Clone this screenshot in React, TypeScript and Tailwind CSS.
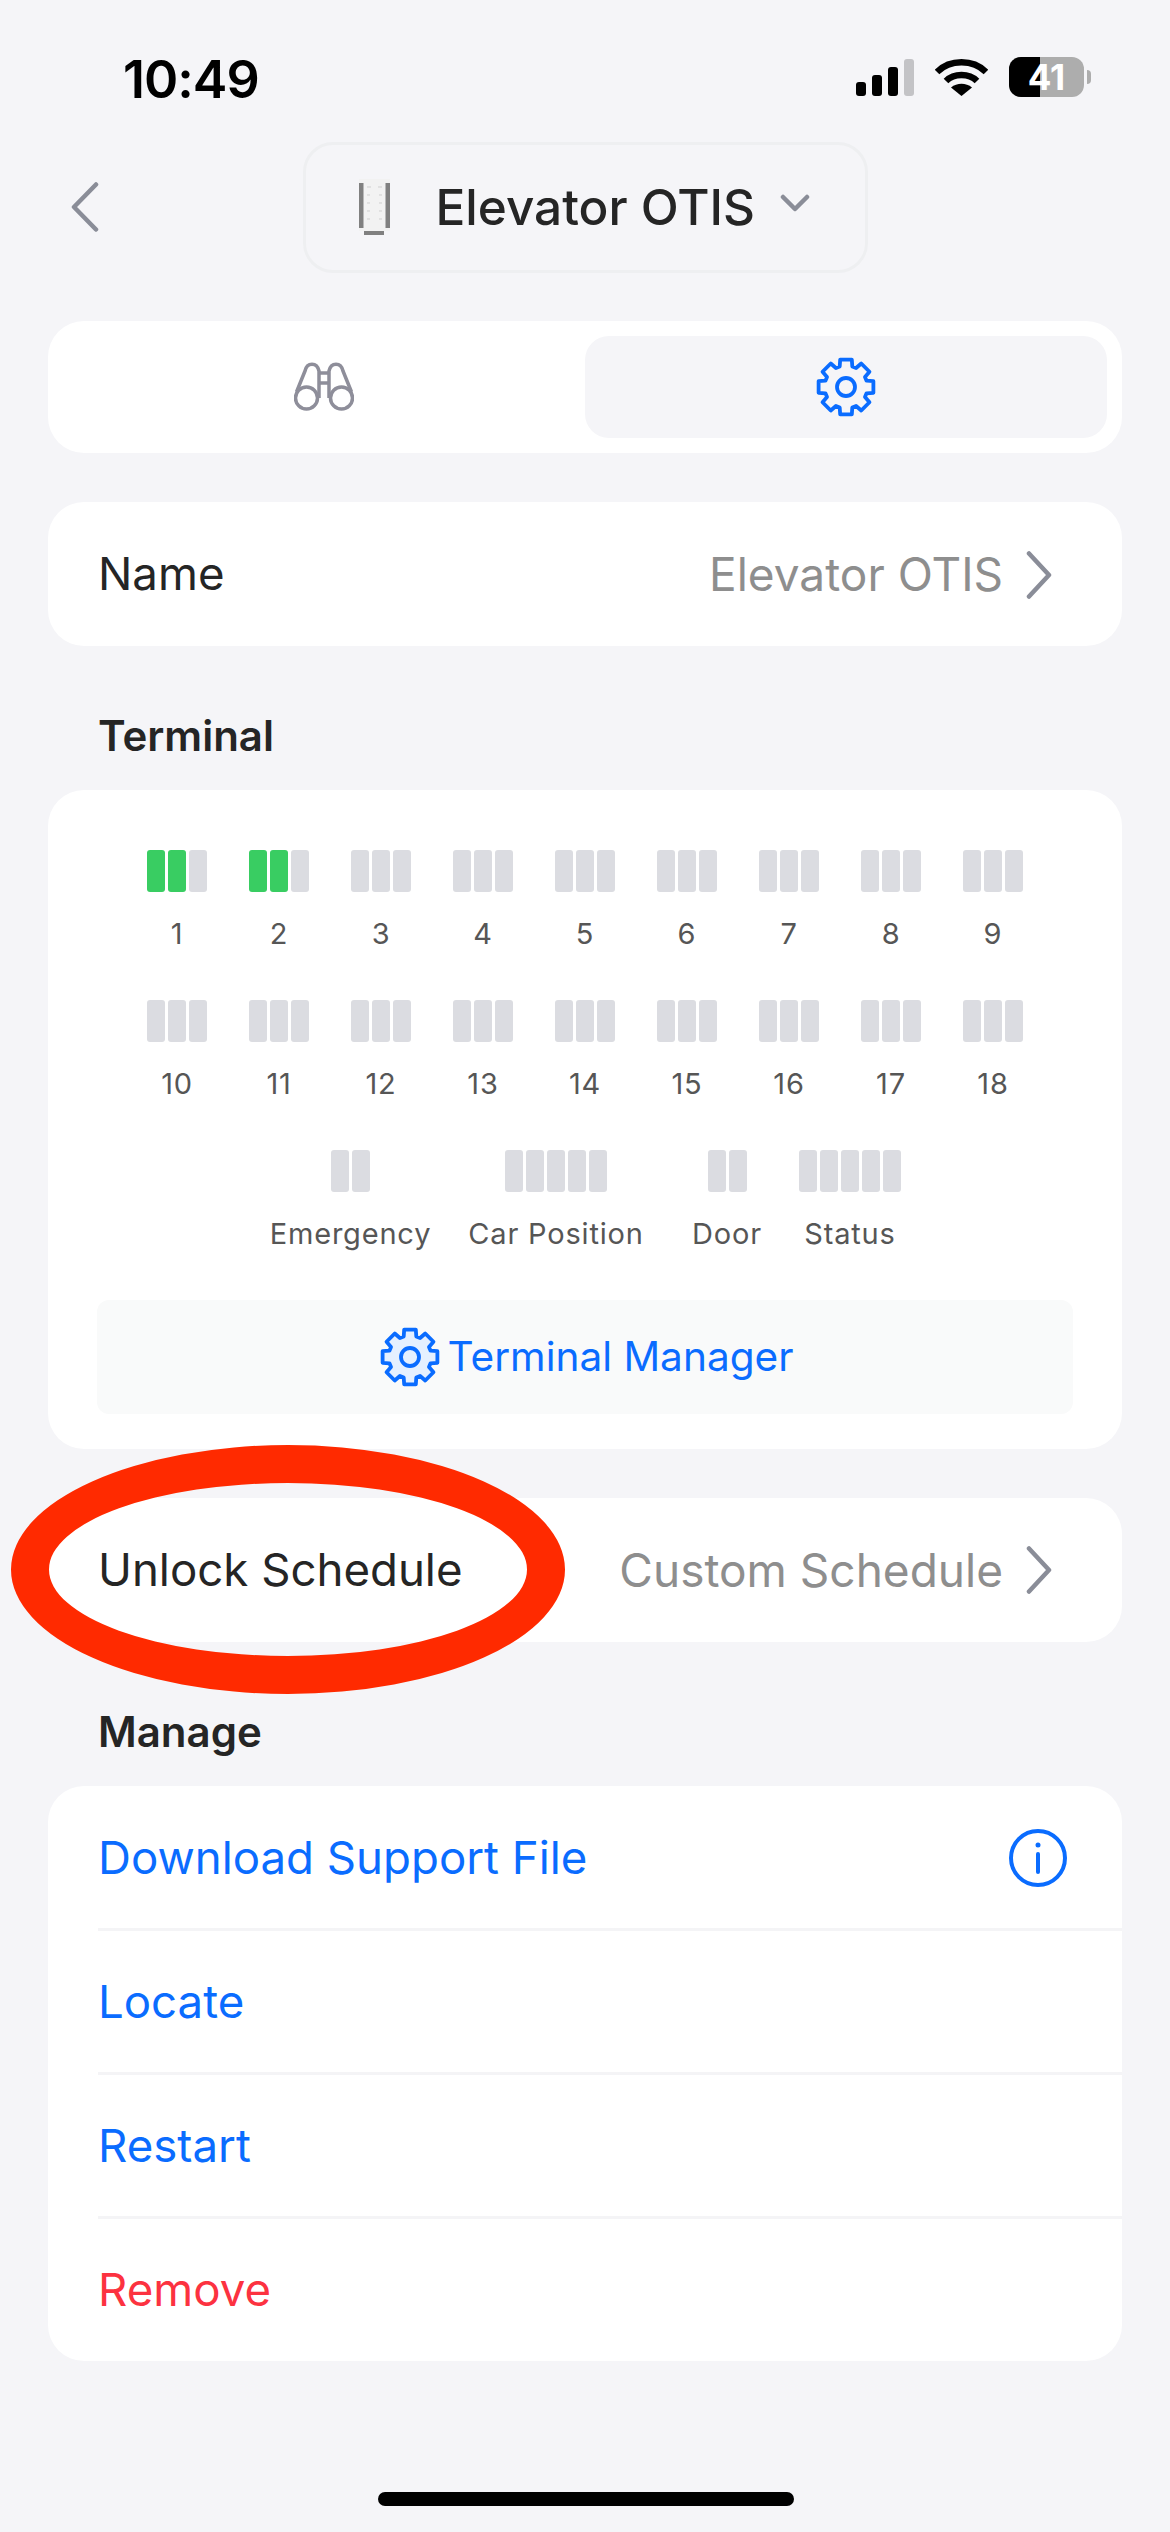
const font = "font-['Inter','Liberation_Sans',sans-serif]";

function gearPath() {
  const pt = (deg: number, r: number) => {
    const a = (deg * Math.PI) / 180;
    return `${(30 + r * Math.cos(a)).toFixed(2)} ${(30 + r * Math.sin(a)).toFixed(2)}`;
  };
  const parts: string[] = [];
  for (let k = 0; k < 8; k++) {
    const c = k * 45 - 90;
    parts.push(pt(c - 17, 21.5), pt(c - 12, 28), pt(c + 12, 28), pt(c + 17, 21.5));
  }
  return `M${parts.join("L")}Z`;
}

function Gear({ size, fill = "none" }: { size: number; fill?: string }) {
  return (
    <svg width={size} height={size} viewBox="0 0 60 60" fill={fill} stroke="#0a6cff" strokeWidth="3.800" strokeLinejoin="round">
      <path d={gearPath()} />
      <circle cx="30" cy="30" r="9" />
    </svg>
  );
}

function Chevron({ className = "" }: { className?: string }) {
  return (
    <svg width="26" height="48" viewBox="0 0 26 48" fill="none" stroke="#8a8d98" strokeWidth="4.500" strokeLinecap="round" strokeLinejoin="round" className={className}>
      <path d="M3 2.500 23 24 3 45.500" />
    </svg>
  );
}

function Bars({ count, on = 0 }: { count: number; on?: number }) {
  return (
    <div className="flex h-[42px] gap-[3px]">
      {Array.from({ length: count }, (_, i) => (
        <div key={i} className={i < on ? "h-full w-[18px] rounded-[3px] bg-[#39cd62]" : "h-full w-[18px] rounded-[3px] bg-[#dbdce1]"} />
      ))}
    </div>
  );
}

function Terminal({ label, count = 3, on = 0, className = "" }: { label: string; count?: number; on?: number; className?: string }) {
  return (
    <div className={`flex flex-col items-center ${className}`}>
      <Bars count={count} on={on} />
      <div className="mt-[24px] text-[29px] leading-[36px] tracking-[0.8px] text-[#565656]">{label}</div>
    </div>
  );
}

export default function App() {
  return (
    <div className={`relative h-[2532px] w-[1170px] overflow-hidden bg-[#f5f5f8] ${font}`}>
      <div className="flex h-[142px] items-start justify-between pl-[123px] pr-[79px] pt-[53px]">
        <div className="text-[52px] font-semibold leading-[54px] tracking-[-1px] text-black">10:49</div>
        <div className="flex items-start pt-[4px]">
          <svg width="60" height="40" viewBox="0 0 60 40" className="mt-[2px]">
            <rect x="2" y="23" width="10" height="14" rx="3" fill="#000" />
            <rect x="18" y="16" width="10" height="21" rx="3" fill="#000" />
            <rect x="34" y="8" width="10" height="29" rx="3" fill="#000" />
            <rect x="50" y="0" width="10" height="37" rx="3" fill="#c3c3c6" />
          </svg>
          <svg width="53" height="40" viewBox="0 0 53 40" className="ml-[21px] mt-[2px]">
            <path d="M2 13C15 0 38 0 51 13" fill="none" stroke="#000" strokeWidth="6.500" strokeLinejoin="round" />
            <path d="M11 22C19 14 34 14 42 22" fill="none" stroke="#000" strokeWidth="6.500" />
            <path d="M26.500 37 16 28.500C22 23.500 31 23.500 37 28.500z" fill="#000" />
          </svg>
          <div className="relative ml-[21px] h-[40px] w-[75px] overflow-hidden rounded-[12px] bg-[#adadad]">
            <div className="h-full w-[31px] bg-black" />
            <div className="absolute inset-0 flex items-center justify-center text-[35px] font-bold leading-none text-white">41</div>
          </div>
          <div className="ml-[3px] mt-[13px] h-[14px] w-[4px] rounded-r-full bg-[#adadad]" />
        </div>
      </div>

      <div className="relative flex h-[131px] items-center justify-center">
        <svg width="28" height="50" viewBox="0 0 28 50" fill="none" stroke="#8a8d98" strokeWidth="4.500" strokeLinecap="round" strokeLinejoin="round" className="absolute left-[71px] top-[40px]">
          <path d="M25 2.500 3 25l22 22.500" />
        </svg>
        <div className="flex h-[131px] w-[565px] items-center rounded-[30px] border-[3px] border-[#eeeff1] pb-[2px] pl-[53px]">
          <svg width="31" height="56" viewBox="0 0 31 56">
            <rect width="31" height="52" fill="#f2f2f2" />
            <rect x="0" y="4" width="4.500" height="45" fill="#808080" />
            <rect x="26.500" y="4" width="4.500" height="45" fill="#808080" />
            <rect x="5" y="52" width="20" height="4" fill="#808080" />
            <path d="M8 8h4M19 8h4M8 16h3M20 16h3M8 24h3M20 24h3M8 32h3M20 32h3M8 40h3M20 40h3" stroke="#cfcfcf" strokeWidth="1" />
          </svg>
          <span className="ml-[46px] text-[49.5px] font-medium leading-[60px] text-[#252525]">Elevator OTIS</span>
          <svg width="30" height="18" viewBox="0 0 30 18" fill="none" stroke="#8a8d98" strokeWidth="4.500" strokeLinecap="round" strokeLinejoin="round" className="ml-[25px] mt-[-8px]">
            <path d="M3 3l12 12L27 3" />
          </svg>
        </div>
      </div>

      <div className="mx-[48px] mt-[48px] flex h-[132px] rounded-[36px] bg-white p-[15px]">
        <div className="flex flex-1 items-center justify-center">
          <svg width="60" height="50" viewBox="0 0 60 50" fill="none" stroke="#8e8e9a" strokeWidth="3.500">
            <circle cx="12.500" cy="36" r="11" />
            <circle cx="47.500" cy="36" r="11" />
            <path d="M2.500 30 11 9C13 0 23 0 25 9v27M57.500 30 49 9C47 0 37 0 35 9v27M25 11h10M25 21h10" strokeLinejoin="round" />
          </svg>
        </div>
        <div className="flex h-[102px] w-[522px] items-center justify-center rounded-[24px] bg-[#f5f5f8]">
          <Gear size={60} />
        </div>
      </div>

      <div className="mx-[48px] mt-[49px] flex h-[144px] items-center justify-between rounded-[36px] bg-white pl-[50px] pr-[70px] pt-[1px] text-[45.6px]">
        <span className="text-[#252525]">Name</span>
        <span className="flex items-center gap-[23px] text-[46px] text-[#8e8e8e]">Elevator OTIS<Chevron /></span>
      </div>

      <div className="ml-[98px] mt-[65px] text-[42px] font-semibold leading-[50px] text-[#252525]">Terminal</div>

      <div className="mx-[48px] mt-[29px] flex h-[659px] flex-col rounded-[36px] bg-white pt-[60px]">
        <div className="grid grid-cols-9 px-[78px]">
          {Array.from({ length: 18 }, (_, i) => (
            <Terminal key={i} label={String(i + 1)} on={i < 2 ? 2 : 0} className="mb-[48px]" />
          ))}
        </div>
        <div className="flex pl-[200px]">
          <Terminal label="Emergency" count={2} className="w-[205px]" />
          <Terminal label="Car Position" count={5} className="w-[206px]" />
          <Terminal label="Door" count={2} className="w-[136px]" />
          <Terminal label="Status" count={5} className="w-[110px]" />
        </div>
        <div className="mx-[49px] mt-[48px] flex h-[114px] items-center justify-center gap-[8px] rounded-[12px] bg-[#f9fafa] pl-[3px]">
          <Gear size={60} fill="#e5f0ff" />
          <span className="text-[40.6px] leading-[52px] text-[#0a6cff]">Terminal Manager</span>
        </div>
      </div>

      <div className="mx-[48px] mt-[49px] flex h-[144px] items-center justify-between rounded-[36px] bg-white pl-[50px] pr-[70px] text-[45.6px]">
        <span className="text-[#252525]">Unlock Schedule</span>
        <span className="flex items-center gap-[23px] text-[46px] text-[#8e8e8e]">Custom Schedule<Chevron /></span>
      </div>

      <div className="ml-[98px] mt-[65px] text-[42px] font-semibold leading-[50px] text-[#252525]">Manage</div>

      <div className="mx-[48px] mt-[29px] flex h-[575px] flex-col overflow-hidden rounded-[36px] bg-white pl-[50px] text-[45.6px]">
        <div className="flex h-[145px] shrink-0 items-center justify-between border-b-[3px] border-[#f4f4f6] pr-[55px] pt-[2px] text-[#0a6cff]">
          <span>Download Support File</span>
          <svg width="58" height="58" viewBox="0 0 58 58" fill="none" stroke="#0a6cff" strokeWidth="4" strokeLinecap="round">
            <circle cx="29" cy="29" r="27" />
            <path d="M29 25v18" />
            <circle cx="29" cy="16" r="2.500" fill="#0a6cff" stroke="none" />
          </svg>
        </div>
        <div className="flex h-[144px] shrink-0 items-center border-b-[3px] border-[#f4f4f6] pt-[2px] text-[#0a6cff]">Locate</div>
        <div className="flex h-[144px] shrink-0 items-center border-b-[3px] border-[#f4f4f6] pt-[2px] text-[#0a6cff]">Restart</div>
        <div className="flex flex-1 items-center text-[#fc3240]">Remove</div>
      </div>

      <div className="absolute left-[378px] top-[2492px] h-[14px] w-[416px] rounded-full bg-black" />
      <div className="absolute left-[11px] top-[1445px] h-[249px] w-[554px] rounded-[50%] border-[38px] border-[#ff2a00]" />
    </div>
  );
}
